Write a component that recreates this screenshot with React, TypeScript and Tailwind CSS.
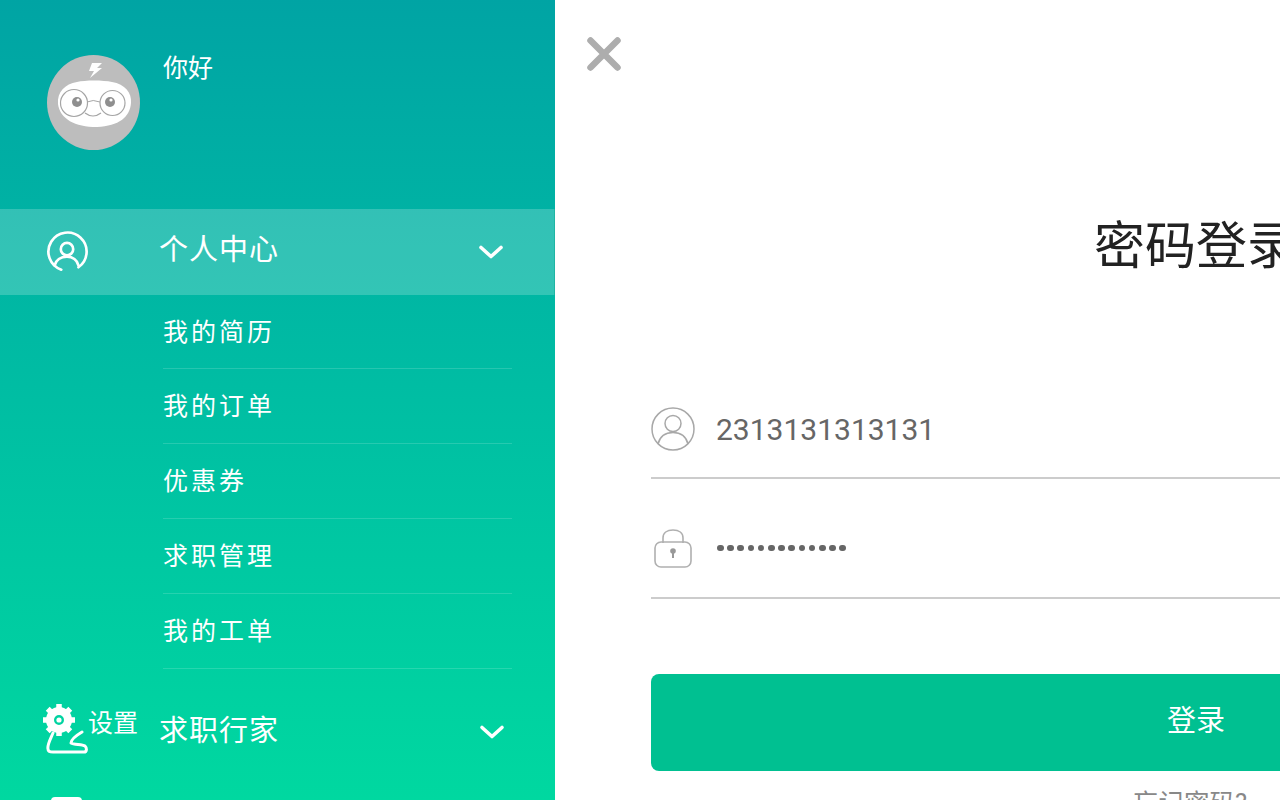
const subItems = ["我的简历", "我的订单", "优惠券", "求职管理", "我的工单"];

function Chevron() {
  return (
    <svg width="26" height="16" viewBox="0 0 26 16" fill="none" stroke="white" strokeWidth="3.6" strokeLinecap="round" strokeLinejoin="round">
      <path d="M3 3.5 L13 12.5 L23 3.5" />
    </svg>
  );
}

function Avatar() {
  return (
    <svg width="94" height="95" viewBox="0 0 94 95" className="shrink-0">
      <ellipse cx="46.5" cy="47.5" rx="46.5" ry="47.5" fill="#bdbdbd" />
      <path d="M45 8 H55 L50 13 H55 L43 23 L47 16 H42 Z" fill="white" />
      <path d="M30 27 C38 25 56 25 65 27 C78 29 85 38 84 48 C83 62 72 71 50 72 C28 72 13 64 11 49 C10 37 18 29 30 27 Z" fill="white" />
      <circle cx="27" cy="48" r="13.5" fill="none" stroke="#a5a5a5" strokeWidth="1.2" />
      <circle cx="65.5" cy="48" r="12.5" fill="none" stroke="#a5a5a5" strokeWidth="1.2" />
      <path d="M40 47 Q46 44 53 47" fill="none" stroke="#a5a5a5" strokeWidth="1" />
      <circle cx="30" cy="47" r="5" fill="#8f8f8f" />
      <circle cx="63" cy="47" r="5" fill="#8f8f8f" />
      <circle cx="31" cy="45" r="1.6" fill="white" />
      <circle cx="64" cy="45" r="1.6" fill="white" />
      <path d="M38 58 Q46 64 54 58" fill="none" stroke="#a5a5a5" strokeWidth="1.2" />
    </svg>
  );
}

function GearIcon() {
  return (
    <svg width="36" height="36" viewBox="0 0 36 36" fill="none" className="shrink-0">
      <circle cx="17" cy="18" r="9" stroke="white" strokeWidth="8" />
      <circle cx="17" cy="18" r="2.6" fill="white" />
      <path
        d="M17 2 V8 M17 28 V34 M1 18 H7 M27 18 H33 M5.7 6.7 L10 11 M24 25 L28.3 29.3 M28.3 6.7 L24 11 M10 25 L5.7 29.3"
        stroke="white"
        strokeWidth="5.5"
      />
    </svg>
  );
}

export default function App() {
  return (
    <div className="flex h-[800px] w-[1280px] overflow-hidden bg-white font-['Roboto','Noto_Sans_CJK_SC',sans-serif]">
      <aside className="relative h-[800px] w-[555px] shrink-0 overflow-hidden bg-gradient-to-b from-[#00a4a4] to-[#00d8a0] text-white">
        <div className="flex h-[209px] pl-[47px] pt-[55px]">
          <Avatar />
          <span className="ml-[22px] mt-[-5px] h-[38px] text-[25px] leading-[38px]">你好</span>
        </div>

        <div className="flex h-[86px] items-center border-r border-[#1fb5a4] bg-white/20 pl-[46px] pr-[50px]">
          <svg width="42" height="42" viewBox="0 0 44 44" fill="none" stroke="white" strokeWidth="2.8" strokeLinecap="round" className="shrink-0">
            <path d="M16 40.5 A20 20 0 1 1 34 38" />
            <circle cx="22" cy="19" r="6.5" />
            <path d="M9 36 C11 29 17 27 22 27 C27 27 32 29 34 36" />
          </svg>
          <span className="ml-[71px] mt-[-2px] flex-1 text-[29px] tracking-[1px]">个人中心</span>
          <Chevron />
        </div>

        <ul className="ml-[163px] mr-[43px] h-[374px]">
          {subItems.map((item, i) => (
            <li
              key={item}
              className={`flex items-center border-b border-white/15 pt-[2px] text-[25px] tracking-[3px] ${i === 0 ? "h-[74px]" : "h-[75px]"}`}
            >
              {item}
            </li>
          ))}
        </ul>

        <div className="flex h-[126px] items-center pl-[46px] pr-[50px]">
          <svg width="44" height="44" viewBox="0 0 44 44" fill="none" stroke="white" strokeWidth="3" strokeLinecap="round" strokeLinejoin="round" className="shrink-0">
            <path d="M7 23 C4 30 1 35 2 39 C2 41 4 42 7 42 H38 C41 42 41 38 39 36 C36 34 28 35 25 33 C25 29 31 25 36 22" />
          </svg>
          <span className="ml-[69px] flex-1 text-[29px] tracking-[1px]">求职行家</span>
          <Chevron />
        </div>

        <div className="ml-[51px] mt-[2px] h-[12px] w-[31px] rounded-t-[4px] bg-white" />

        {/* floating settings shortcut, sits over the menu */}
        <div className="absolute left-[42px] top-[702px] flex items-start">
          <GearIcon />
          <span className="ml-[10px] mt-[4px] text-[25px] leading-[36px]">设置</span>
        </div>
      </aside>

      <main className="w-[1282px] shrink-0 px-[96px]">
        <div className="ml-[-65px] flex h-[107px] items-start pt-[36px]">
          <svg width="36" height="36" viewBox="0 0 36 36" stroke="#adadad" strokeWidth="6.5" strokeLinecap="round">
            <path d="M4.5 4.5 L31.5 31.5 M31.5 4.5 L4.5 31.5" />
          </svg>
        </div>

        <h1 className="mt-[98px] h-[84px] text-center text-[51px] leading-[84px] font-normal text-[#222222]">密码登录</h1>

        <div className="mt-[108px] flex h-[82px] items-center border-b-2 border-[#cccccc] pb-[16px]">
          <svg width="44" height="44" viewBox="0 0 44 44" fill="none" stroke="#a8a8a8" strokeWidth="1.5" className="shrink-0">
            <circle cx="22" cy="22" r="21" />
            <circle cx="22" cy="16.5" r="8" />
            <path d="M7 37 C9 29 15 25.5 22 25.5 C29 25.5 35 29 37 37" />
          </svg>
          <span className="ml-[21px] text-[30px] text-[#666666]">2313131313131</span>
        </div>

        <div className="mt-[37px] flex h-[83px] items-center border-b-2 border-[#cccccc] pb-[17px]">
          <svg width="44" height="44" viewBox="0 0 44 44" fill="none" stroke="#b0b0b0" strokeWidth="1.6" className="shrink-0">
            <path d="M12 17 V12 C12 7 16 4 22 4 C28 4 32 7 32 12 V17" />
            <rect x="4" y="16" width="36" height="25" rx="6" />
            <circle cx="22" cy="25" r="2.8" fill="#999999" stroke="none" />
            <path d="M22 26 V32" stroke="#999999" strokeWidth="2" />
          </svg>
          <div className="ml-[22px] flex gap-[3.5px]">
            {Array.from({ length: 13 }, (_, i) => (
              <span key={i} className="h-[6.7px] w-[6.7px] rounded-full bg-[#666666]" />
            ))}
          </div>
        </div>

        <button className="mt-[75px] flex h-[97px] w-full items-center justify-center rounded-[8px] bg-[#00c091] pb-[2px] text-[29px] text-white">
          登录
        </button>

        <p className="mt-[14px] pr-[12px] text-center text-[25.5px] leading-[36px] text-[#888888]">忘记密码?</p>
      </main>
    </div>
  );
}
